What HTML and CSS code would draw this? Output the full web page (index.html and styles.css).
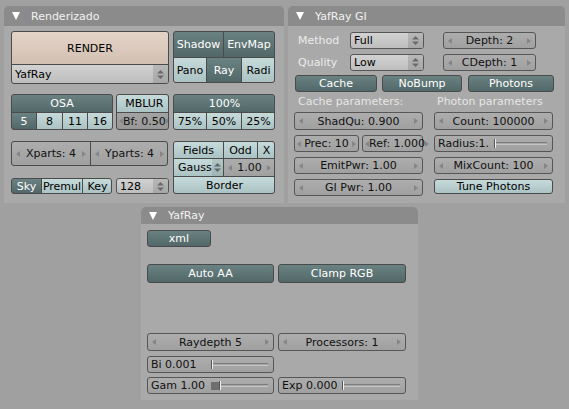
FILE: index.html
```html
<!DOCTYPE html>
<html>
<head>
<meta charset="utf-8">
<link rel="stylesheet" href="styles.css">
</head>
<body>
<div class="screen">
  <div class="toprow">
    <!-- Renderizado -->
    <div class="panel p-render">
      <div class="ph"><span class="tri"></span>Renderizado</div>
      <div class="pb pb-render">
        <div class="lrow r1">
          <div class="colA">
            <div class="grp g-render">
              <div class="b beige">RENDER</div>
              <div class="menu flat"><span class="mt">YafRay</span><span class="mu"><svg width="7" height="9" viewBox="0 0 7 9"><path d="M3.5 0L7 3.5H0Z M3.5 9L0 5.5H7Z" fill="#6a6a6a"/></svg></span></div>
            </div>
          </div>
          <div class="colB">
            <div class="grp g-shadow">
              <div class="sub c2"><div class="b dk">Shadow</div><div class="b dk">EnvMap</div></div>
              <div class="sub c3"><div class="b lt">Pano</div><div class="b dk">Ray</div><div class="b lt">Radi</div></div>
            </div>
          </div>
        </div>
        <div class="lrow r2">
          <div class="colA flexrow">
            <div class="grp g-osa">
              <div class="b dk">OSA</div>
              <div class="sub c4"><div class="b dk">5</div><div class="b lt">8</div><div class="b lt">11</div><div class="b lt">16</div></div>
            </div>
            <div class="grp g-mblur">
              <div class="b lt">MBLUR</div>
              <div class="num dark"><span class="al"></span><span>Bf: 0.50</span><span class="ar"></span></div>
            </div>
          </div>
          <div class="colB">
            <div class="grp g-pct">
              <div class="b dk">100%</div>
              <div class="sub c3b"><div class="b lt">75%</div><div class="b lt">50%</div><div class="b lt">25%</div></div>
            </div>
          </div>
        </div>
        <div class="lrow r3">
          <div class="colA">
            <div class="grp g-parts">
              <div class="num"><span class="al"></span><span>Xparts: 4</span><span class="ar"></span></div>
              <div class="num"><span class="al"></span><span>Yparts: 4</span><span class="ar"></span></div>
            </div>
            <div class="flexrow skyrow">
              <div class="grp g-sky">
                <div class="b dk">Sky</div><div class="b lt">Premul</div><div class="b lt">Key</div>
              </div>
              <div class="menu m128"><span class="mt">128</span><span class="mu"><svg width="7" height="9" viewBox="0 0 7 9"><path d="M3.5 0L7 3.5H0Z M3.5 9L0 5.5H7Z" fill="#6a6a6a"/></svg></span></div>
            </div>
          </div>
          <div class="colB">
            <div class="grp g-fields">
              <div class="sub cf"><div class="b lt">Fields</div><div class="b lt">Odd</div><div class="b lt">X</div></div>
              <div class="sub cg">
                <div class="menu tealmenu flat"><span class="mt">Gauss</span><span class="mu"><svg width="7" height="9" viewBox="0 0 7 9"><path d="M3.5 0L7 3.5H0Z M3.5 9L0 5.5H7Z" fill="#5d6b6b"/></svg></span></div>
                <div class="num flat"><span class="al"></span><span>1.00</span><span class="ar"></span></div>
              </div>
              <div class="b lt">Border</div>
            </div>
          </div>
        </div>
      </div>
    </div>

    <!-- YafRay GI -->
    <div class="panel p-gi">
      <div class="ph"><span class="tri"></span>YafRay GI</div>
      <div class="pb pb-gi">
        <div class="girow gr1">
          <span class="lbl">Method</span>
          <div class="menu m-gi"><span class="mt">Full</span><span class="mu"><svg width="7" height="9" viewBox="0 0 7 9"><path d="M3.5 0L7 3.5H0Z M3.5 9L0 5.5H7Z" fill="#6a6a6a"/></svg></span></div>
          <div class="num n-depth"><span class="al"></span><span>Depth: 2</span><span class="ar"></span></div>
        </div>
        <div class="girow gr2">
          <span class="lbl">Quality</span>
          <div class="menu m-gi"><span class="mt">Low</span><span class="mu"><svg width="7" height="9" viewBox="0 0 7 9"><path d="M3.5 0L7 3.5H0Z M3.5 9L0 5.5H7Z" fill="#6a6a6a"/></svg></span></div>
          <div class="num n-depth"><span class="al"></span><span>CDepth: 1</span><span class="ar"></span></div>
        </div>
        <div class="girow gr3">
          <div class="b dk one w-cache">Cache</div>
          <div class="b dk one w-nobump">NoBump</div>
          <div class="b dk one w-photons">Photons</div>
        </div>
        <div class="gicols">
          <div class="gcol gl">
            <div class="sect">Cache parameters:</div>
            <div class="num h18"><span class="al"></span><span>ShadQu: 0.900</span><span class="ar"></span></div>
            <div class="flexrow pr">
              <div class="num w-prec"><span class="al"></span><span>Prec: 10</span><span class="ar"></span></div>
              <div class="num w-ref"><span class="al"></span><span>Ref: 1.000</span><span class="ar"></span></div>
            </div>
            <div class="num"><span class="al"></span><span>EmitPwr: 1.00</span><span class="ar"></span></div>
            <div class="num"><span class="al"></span><span>GI Pwr: 1.00</span><span class="ar"></span></div>
          </div>
          <div class="gcol gr">
            <div class="sect">Photon parameters</div>
            <div class="num h18"><span class="al"></span><span>Count: 100000</span><span class="ar"></span></div>
            <div class="slider"><span class="st">Radius:1.</span><span class="trk"><span class="fill" style="width:0px"></span><span class="hdl"></span><span class="rest"></span></span></div>
            <div class="num"><span class="al"></span><span>MixCount: 100</span><span class="ar"></span></div>
            <div class="b lt one">Tune Photons</div>
          </div>
        </div>
      </div>
    </div>
  </div>

  <!-- YafRay -->
  <div class="panel p-yaf">
    <div class="ph ph-small"><span class="tri"></span>YafRay</div>
    <div class="pb pb-yaf">
      <div class="b dk one w-xml">xml</div>
      <div class="flexrow yrow aa">
        <div class="b dk one yw h19">Auto AA</div>
        <div class="b dk one yw2 h19">Clamp RGB</div>
      </div>
      <div class="flexrow yrow rd">
        <div class="num yw h18"><span class="al"></span><span>Raydepth 5</span><span class="ar"></span></div>
        <div class="num yw2 h18"><span class="al"></span><span>Processors: 1</span><span class="ar"></span></div>
      </div>
      <div class="flexrow yrow bi">
        <div class="slider yw"><span class="st">Bi 0.001</span><span class="trk"><span class="fill" style="width:0px"></span><span class="hdl"></span><span class="rest"></span></span></div>
      </div>
      <div class="flexrow yrow gm">
        <div class="slider yw"><span class="st">Gam 1.00</span><span class="trk"><span class="fill" style="width:8px"></span><span class="hdl"></span><span class="rest"></span></span></div>
        <div class="slider yw2"><span class="st">Exp 0.000</span><span class="trk"><span class="fill" style="width:0px"></span><span class="hdl"></span><span class="rest"></span></span></div>
      </div>
    </div>
  </div>
</div>
</body>
</html>
```

FILE: styles.css
```css
* { box-sizing: border-box; }
html, body { margin: 0; padding: 0; }
body {
  width: 569px;
  height: 409px;
  overflow: hidden;
  background: #a0a0a0;
  font-family: "DejaVu Sans", sans-serif;
  font-size: 11px;
  color: #000;
}
.screen { padding: 6px 0 0 4px; }
.toprow { display: flex; gap: 4px; }

.panel { display: flex; flex-direction: column; }
.p-render { width: 280px; }
.p-gi { width: 277px; }
.p-yaf { width: 277px; margin: 4px 0 0 137px; }

.ph {
  height: 20px;
  background: #8b8b8b;
  border-radius: 5px 5px 0 0;
  color: #f2f2f2;
  display: flex;
  align-items: center;
  padding-left: 8px;
}
.ph-small { height: 17px; }
.tri {
  width: 0; height: 0;
  border-left: 4.5px solid transparent;
  border-right: 4.5px solid transparent;
  border-top: 8px solid #fff;
  margin-right: 11px;
}
.pb { background: #a9a9a9; }
.pb-render { height: 177px; padding: 5px 0 0 7px; }
.pb-gi { height: 177px; padding: 0 0 0 6px; }
.pb-yaf { height: 176px; padding: 6px 0 0 6px; }

/* generic buttons */
.b {
  display: flex;
  align-items: center;
  justify-content: center;
  white-space: nowrap;
}
.dk { background: linear-gradient(#6b8282, #526868); color: #fff; }
.lt { background: linear-gradient(#c6dada, #acc3c3); color: #000; }
.beige { background: linear-gradient(#e4d4c8, #d2c0b2); color: #000; }
.one { border: 1px solid #4a4a4a; border-radius: 3px; }

.grp {
  display: grid;
  gap: 1px;
  background: #4b4b4b;
  border: 1px solid #4b4b4b;
  border-radius: 3px;
  overflow: hidden;
}
.sub { display: grid; gap: 1px; }
.flexrow { display: flex; }

/* left panel rows */
.lrow { display: flex; gap: 4px; }
.colA { width: 158px; }
.colB { width: 102px; }
.r2 { margin-top: 10px; }
.r3 { margin-top: 11px; }

.g-render { grid-template-rows: 32px 18px; }
.g-shadow { height: 52px; grid-template-rows: 25px 24px; }
.c2 { grid-template-columns: 49px 50px; }
.c3 { grid-template-columns: 32px 34px 33px; }

.r2 .flexrow { gap: 3px; }
.g-osa { width: 102px; height: 36px; grid-template-rows: 17px 16px; }
.c4 { grid-template-columns: 24px 25px 24px 24px; }
.g-mblur { width: 53px; height: 36px; grid-template-rows: 17px 16px; }
.g-pct { height: 36px; grid-template-rows: 17px 16px; }
.c3b { grid-template-columns: 32px 34px 33px; }

.g-parts { width: 157px; height: 25px; grid-template-columns: 78px 77px; }
.skyrow { margin-top: 12px; gap: 4px; height: 16px; }
.g-sky { width: 101px; grid-template-columns: 29px 40px 29px; }
.m128 { width: 53px; }

.g-fields { height: 53px; grid-template-rows: 16px 17px 16px; }
.cf { grid-template-columns: 49px 33px 17px; }
.cg { grid-template-columns: 49px 51px; }

/* number field */
.num {
  display: flex;
  align-items: center;
  justify-content: space-between;
  padding: 0 4px;
  background: linear-gradient(#adadad, #a0a0a0);
  border: 1px solid #565656;
  border-radius: 3px;
  color: #111;
  white-space: nowrap;
  height: 17px;
}
.grp .num, .num.flat { border: none; border-radius: 0; height: auto; }
.num.dark { background: linear-gradient(#a3a3a3, #989898); padding: 0 2px; }
.al, .ar { width: 0; height: 0; border-top: 3.5px solid transparent; border-bottom: 3.5px solid transparent; }
.al { border-right: 4px solid #858585; }
.ar { border-left: 4px solid #858585; }

/* menu */
.menu {
  display: flex;
  align-items: center;
  background: linear-gradient(#d2d2d2, #bdbdbd);
  border: 1px solid #565656;
  border-radius: 3px;
  color: #000;
  overflow: hidden;
}
.menu.flat { border: none; border-radius: 0; }
.mt { flex: 1; padding-left: 3px; }
.mu {
  width: 15px;
  align-self: stretch;
  display: flex;
  align-items: center;
  justify-content: center;
  background: linear-gradient(#b8b8b8, #a6a6a6);
}
.tealmenu { background: linear-gradient(#c6dada, #acc3c3); }
.tealmenu .mt { padding-left: 4px; }
.tealmenu .mu { background: linear-gradient(#b3c6c6, #9fb3b3); width: 13px; }

/* GI panel */
.girow { display: flex; align-items: center; height: 17px; }
.gr1 { margin-top: 6px; }
.gr2 { margin-top: 5px; }
.gr3 { margin-top: 4px; margin-left: 1px; }
.lbl { width: 56px; padding-left: 4px; color: #ececec; }
.m-gi { width: 74px; height: 17px; }
.n-depth { width: 93px; margin-left: 19px; }
.w-cache { width: 82px; height: 17px; }
.w-nobump { width: 80px; height: 17px; margin-left: 5px; }
.w-photons { width: 86px; height: 17px; margin-left: 6px; }

.gicols { display: flex; gap: 11px; }
.gcol { display: flex; flex-direction: column; gap: 5px; }
.gl { width: 129px; }
.gr { width: 119px; }
.sect { height: 13px; margin-top: 3px; margin-bottom: -1px; color: #e6e6e6; line-height: 13px; padding-left: 4px; white-space: nowrap; }
.gr .sect { padding-left: 3px; }
.h18 { height: 18px; }
.h19 { height: 19px; }
.pr { gap: 3px; }
.w-prec { width: 65px; padding: 0 2px; }
.w-ref { width: 61px; padding: 0 2px; }

/* slider */
.slider {
  display: flex;
  align-items: center;
  height: 17px;
  background: linear-gradient(#adadad, #a0a0a0);
  border: 1px solid #565656;
  border-radius: 3px;
  color: #111;
  white-space: nowrap;
}
.st { width: 50%; padding-left: 3px; overflow: hidden; }
.trk { flex: 1; display: flex; align-items: center; margin-right: 5px; height: 9px; }
.fill { height: 8px; background: #6f6f6f; }
.hdl { width: 2px; height: 9px; background: #f0f0f0; border-left: 1px solid #555; }
.rest { flex: 1; height: 3px; border-top: 1px solid #7c7c7c; border-bottom: 1px solid #c4c4c4; }

/* YafRay panel */
.w-xml { width: 64px; height: 17px; }
.yrow { gap: 4px; }
.yw { width: 127px; }
.yw2 { width: 128px; }
.aa { margin-top: 17px; }
.rd { margin-top: 50px; }
.bi { margin-top: 5px; }
.gm { margin-top: 4px; }
```
